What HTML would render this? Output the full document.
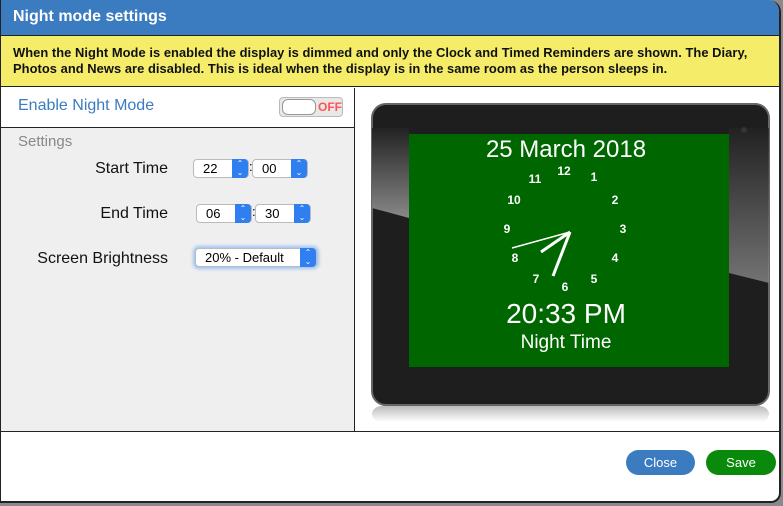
<!DOCTYPE html>
<html><head><style>
body{margin:0;width:783px;height:506px;background:#8a8a8a;font-family:"Liberation Sans",sans-serif;overflow:hidden;position:relative}
.dlg{position:absolute;left:0;top:0;width:778px;height:501px;background:#fff;border:2px solid #222;border-top:0;border-left:1px solid #222;border-radius:0 12px 10px 0;overflow:hidden}
.title{position:absolute;left:0;top:0;right:0;height:35px;background:#3b7bbf;border-bottom:1px solid #222;color:#fff;font-weight:bold;font-size:16px;line-height:34px;padding-left:12px}
.info{position:absolute;left:0;top:36px;right:0;height:51px;background:#f5ec6a;border-bottom:1px solid #222;font-weight:bold;font-size:12.9px;line-height:16px;padding:9px 0 0 12px;box-sizing:border-box;color:#111;white-space:nowrap;letter-spacing:0.05px}
.left{position:absolute;left:0;top:88px;width:353px;height:343px;border-right:1px solid #222;background:#efefef}
.en{height:39px;background:#fff;border-bottom:1px solid #222;color:#3b7bbf;font-size:16px;line-height:36px;padding-left:17px;position:relative}
.tog{position:absolute;left:278px;top:9px;width:64px;height:20px;border:1px solid #bbb;border-radius:4px;background:#e8e8e8;box-sizing:border-box}
.tog .k{position:absolute;left:2px;top:1px;width:34px;height:16px;border:1px solid #999;border-radius:6px;background:#fff;box-sizing:border-box}
.tog .t{position:absolute;left:38px;top:0;font-size:12px;line-height:18px;color:#f55;font-weight:bold}
.set{position:absolute;left:17px;top:45px;color:#888;font-size:15px}
.lbl{position:absolute;font-size:16px;color:#111;text-align:right;width:150px;left:17px}
.sel{position:absolute;height:19px;background:#fff;border:1px solid #bbb;border-radius:4px;box-sizing:border-box;font-size:13px;line-height:17px;padding-left:9px}
.sel b{position:absolute;right:0;top:-1px;width:16px;height:19px;background:#2f7ff0;border-radius:0 4px 4px 0;color:#fff;font-size:8px;line-height:9px;text-align:center;font-weight:normal}
.right{position:absolute;left:354px;top:88px;width:424px;height:343px;background:#fff}
.bottom{position:absolute;left:0;top:431px;right:0;height:1px;background:#222}
.btn{position:absolute;top:450px;height:25px;border-radius:13px;color:#fff;font-size:13px;line-height:25px;text-align:center}
</style></head><body>
<div class="dlg">
<div class="title">Night mode settings</div>
<div class="info">When the Night Mode is enabled the display is dimmed and only the Clock and Timed Reminders are shown. The Diary,<br>Photos and News are disabled. This is ideal when the display is in the same room as the person sleeps in.</div>
<div class="left">
<div class="en">Enable Night Mode<div class="tog"><div class="k"></div><div class="t">OFF</div></div></div>
<div class="set">Settings</div>
<div class="lbl" style="top:72px">Start Time</div>
<div class="lbl" style="top:117px">End Time</div>
<div class="lbl" style="top:162px">Screen Brightness</div>
<div class="sel" style="left:192px;top:71px;width:56px">22<b>⌃<br>⌄</b></div>
<div style="position:absolute;left:248px;top:71px;font-size:13px">:</div>
<div class="sel" style="left:251px;top:71px;width:56px">00<b>⌃<br>⌄</b></div>
<div class="sel" style="left:195px;top:116px;width:56px">06<b>⌃<br>⌄</b></div>
<div style="position:absolute;left:251px;top:116px;font-size:13px">:</div>
<div class="sel" style="left:254px;top:116px;width:56px">30<b>⌃<br>⌄</b></div>
<div class="sel" style="left:194px;top:160px;width:122px;box-shadow:0 0 3px 2px #9cc3f5">20% - Default<b>⌃<br>⌄</b></div>
</div>
<div class="right">
<svg width="424" height="343" style="position:absolute;left:0;top:0">
<defs>
<linearGradient id="r" x1="0" y1="0" x2="0" y2="1"><stop offset="0" stop-color="#bbb"/><stop offset="1" stop-color="#fff"/></linearGradient>
<linearGradient id="gl" x1="0" y1="0" x2="0" y2="1"><stop offset="0" stop-color="#222"/><stop offset="1" stop-color="#888"/></linearGradient>
<clipPath id="c"><rect x="17" y="16" width="397" height="301" rx="14"/></clipPath>
</defs>
<rect x="17" y="318" width="397" height="16" rx="10" fill="url(#r)"/>
<rect x="17" y="16" width="397" height="301" rx="14" fill="#1e1e1e" stroke="#666" stroke-width="2"/>
<g clip-path="url(#c)">
<path d="M17 40 L54 40 L54 130 L17 120Z" fill="url(#gl)"/>
<path d="M374 40 L414 40 L414 195 L374 185Z" fill="url(#gl)" opacity=".8"/>
</g>
<circle cx="389" cy="42" r="3" fill="#333"/>
<rect x="54" y="46" width="320" height="233" fill="#006600"/>
<g fill="#fff" font-weight="bold" font-size="12" text-anchor="middle">
<text x="209" y="87">12</text><text x="239" y="93">1</text><text x="260" y="116">2</text><text x="268" y="145">3</text><text x="260" y="174">4</text><text x="239" y="195">5</text><text x="210" y="203">6</text><text x="181" y="195">7</text><text x="160" y="174">8</text><text x="152" y="145">9</text><text x="159" y="116">10</text><text x="180" y="95">11</text>
</g>
<line x1="157" y1="160" x2="215" y2="144" stroke="#fff" stroke-width="1.5"/>
<path d="M215 144 L198 188 M215 144 L186 164" stroke="#fff" stroke-width="3" fill="none"/>
<g fill="#fff" text-anchor="middle">
<text x="211" y="69" font-size="24">25 March 2018</text>
<text x="211" y="235" font-size="28">20:33 PM</text>
<text x="211" y="260" font-size="19">Night Time</text>
</g>
</svg>
</div>
<div class="bottom"></div>
<div class="btn" style="left:625px;width:69px;background:#3b7bbf">Close</div>
<div class="btn" style="left:705px;width:70px;background:#0a8a0a">Save</div>
</div>
</body></html>
